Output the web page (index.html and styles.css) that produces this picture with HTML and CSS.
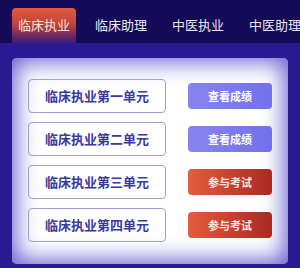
FILE: index.html
```html
<!DOCTYPE html>
<html lang="zh-CN">
<head>
  <meta charset="UTF-8">
  <meta name="viewport" content="width=device-width, initial-scale=1.0">
  <title>考试单元</title>
  <link rel="stylesheet" href="styles.css">
</head>
<body>

  <!-- Tabs -->
  <div class="tabs">
    <div class="tab active">临床执业</div>
    <div class="tab">临床助理</div>
    <div class="tab">中医执业</div>
    <div class="tab">中医助理</div>
  </div>

  <!-- Unit list -->
  <div class="card">
    <div class="row">
      <div class="unit">临床执业第一单元</div>
      <button class="btn btn-score">查看成绩</button>
    </div>
    <div class="row">
      <div class="unit">临床执业第二单元</div>
      <button class="btn btn-score">查看成绩</button>
    </div>
    <div class="row">
      <div class="unit">临床执业第三单元</div>
      <button class="btn btn-exam">参与考试</button>
    </div>
    <div class="row">
      <div class="unit">临床执业第四单元</div>
      <button class="btn btn-exam">参与考试</button>
    </div>
  </div>

</body>
</html>
```

FILE: styles.css
```css
body {
  margin: 0;
  padding: 0;
  background-color: #2a1a92;
  font-family: "Noto Sans CJK SC", "Noto Sans", sans-serif;
  height: 268px;
  overflow: hidden;
}

.tabs {
  height: 43px;
  background-color: #150b57;
  display: flex;
  align-items: flex-end;
  gap: 13px;
  padding: 0 12px;
  white-space: nowrap;
}

.tab {
  height: 35px;
  line-height: 33px;
  padding: 0 6px;
  font-size: 13px;
  color: #e8e6f6;
  flex-shrink: 0;
}

.tab.active {
  background: linear-gradient(#e25a3c, #c0443e 45%, #3c1c78);
  border-radius: 4px 4px 0 0;
  color: #ffe3cc;
}

.card {
  margin: 15px 12px 0;
  height: 206px;
  box-sizing: border-box;
  padding: 21px 16px 0;
  background-color: #fff;
  border-radius: 5px;
  box-shadow: inset 0 0 22px 4px rgba(96, 84, 206, 0.95);
  display: flex;
  flex-direction: column;
  gap: 9px;
}

.row {
  display: flex;
  align-items: center;
  justify-content: space-between;
}

.unit {
  width: 138px;
  height: 34px;
  box-sizing: border-box;
  border: 1px solid #a19fcc;
  border-radius: 4px;
  text-align: center;
  line-height: 32px;
  font-size: 13px;
  font-weight: bold;
  color: #3b3a9c;
}

.btn {
  width: 84px;
  height: 26px;
  border: none;
  border-radius: 4px;
  font-family: inherit;
  font-size: 11px;
  font-weight: bold;
  color: #fff;
  padding: 0;
}

.btn-score {
  background: linear-gradient(90deg, #8784f0, #7370ea);
}

.btn-exam {
  background: linear-gradient(90deg, #e45c3e, #a92a22);
  color: #fbe6e0;
}
```
